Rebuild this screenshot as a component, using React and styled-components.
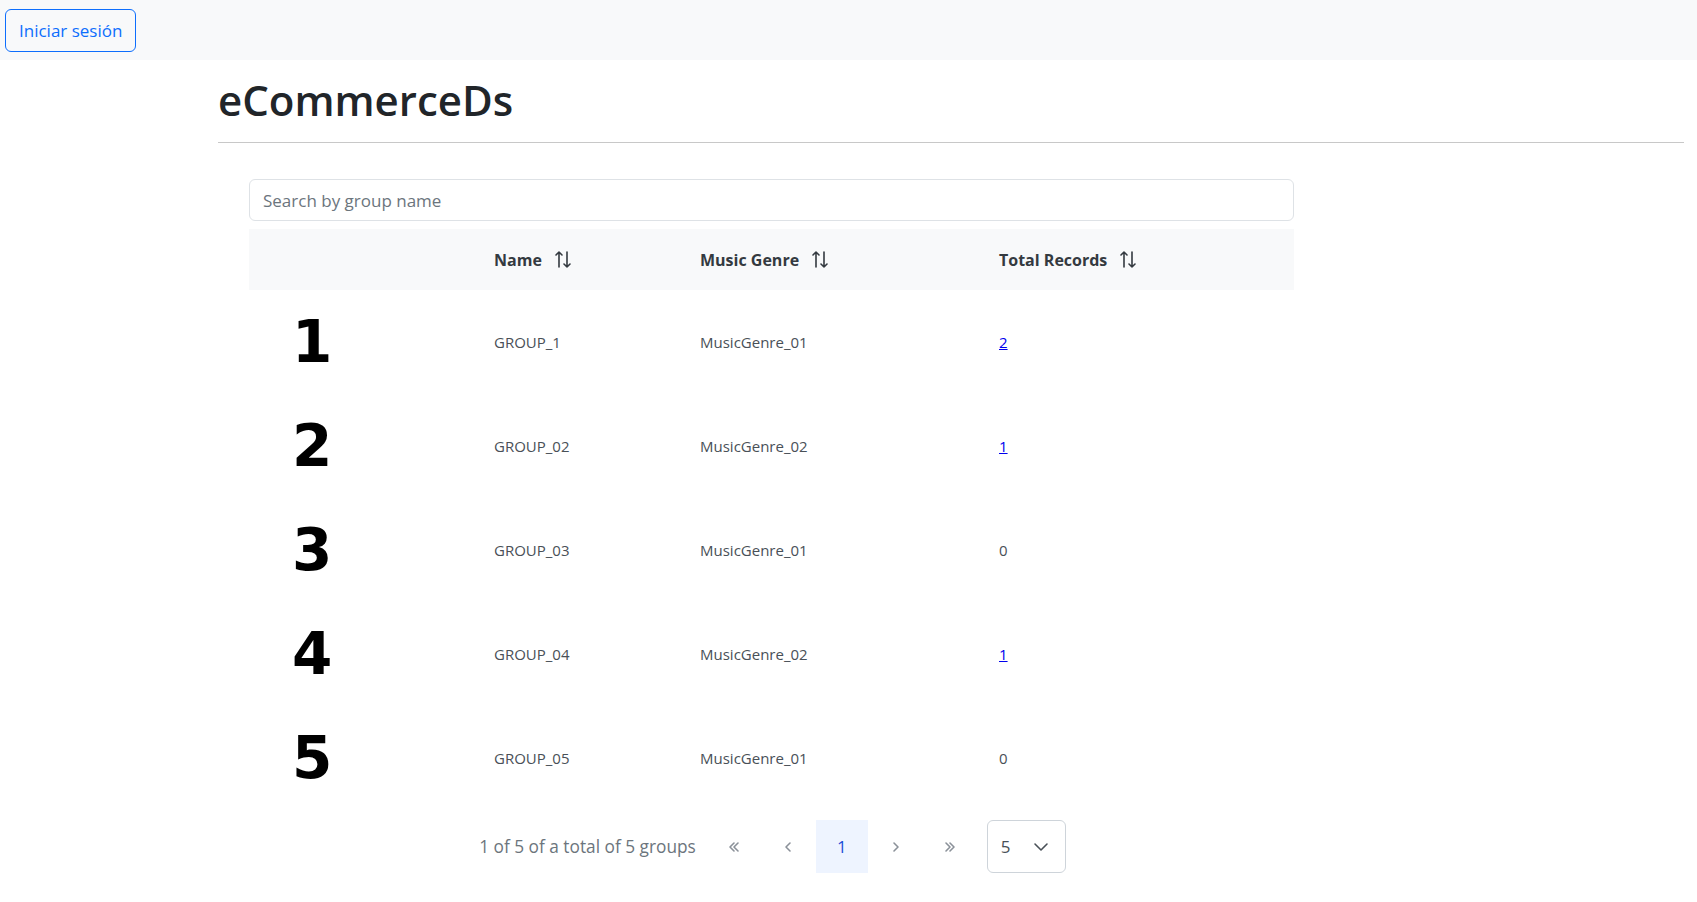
import React from "react";
import styled, { createGlobalStyle } from "styled-components";

const GlobalStyle = createGlobalStyle`
  body {
    margin: 0;
    background: #fff;
    font-family: "Open Sans", "Noto Sans", sans-serif;
    color: #212529;
  }
`;

const groups = [
  { id: 1, name: "GROUP_1", genre: "MusicGenre_01", total: 2 },
  { id: 2, name: "GROUP_02", genre: "MusicGenre_02", total: 1 },
  { id: 3, name: "GROUP_03", genre: "MusicGenre_01", total: 0 },
  { id: 4, name: "GROUP_04", genre: "MusicGenre_02", total: 1 },
  { id: 5, name: "GROUP_05", genre: "MusicGenre_01", total: 0 },
];

const Navbar = styled.nav`
  height: 60px;
  background: #f8f9fa;
  display: flex;
  align-items: center;
  padding: 0 5px;
  box-sizing: border-box;
`;

const LoginButton = styled.button`
  height: 43px;
  padding: 0 13px;
  border: 1px solid #0d6efd;
  border-radius: 6px;
  background: transparent;
  color: #0d6efd;
  font-family: inherit;
  font-size: 17px;
  cursor: pointer;
`;

const Main = styled.main`
  margin: 0 13px 0 218px;
`;

const Title = styled.h1`
  margin: 14px 0 0;
  font-size: 42px;
  font-weight: 600;
  line-height: 52px;
  color: #212529;
`;

const Rule = styled.hr`
  margin: 16px 0 0;
  border: 0;
  border-top: 1px solid #c8c8c8;
`;

const TableWrap = styled.section`
  width: 1045px;
  margin: 36px 0 0 31px;
`;

const Search = styled.input`
  width: 100%;
  height: 42px;
  box-sizing: border-box;
  padding: 0 13px;
  border: 1px solid #dee2e6;
  border-radius: 6px;
  font-family: inherit;
  font-size: 17px;
  color: #495057;
  &::placeholder {
    color: #6c757d;
  }
`;

const Row = styled.div`
  display: grid;
  grid-template-columns: 229px 206px 299px 1fr;
  align-items: center;
  height: ${(p) => (p.head ? "61px" : "104px")};
  background: ${(p) => (p.head ? "#f8f9fa" : "#fff")};
  margin-top: ${(p) => (p.head ? "8px" : "0")};
`;

const HeadCell = styled.div`
  display: flex;
  align-items: center;
  gap: 12px;
  padding: 0 16px;
  font-size: 16px;
  font-weight: 700;
  color: #343a40;
`;

const Cell = styled.div`
  padding: 0 16px;
  font-size: 15px;
  color: #495057;
`;

const Rank = styled.div`
  padding-left: 43px;
  font-family: "DejaVu Sans", sans-serif;
  font-weight: 700;
  font-size: 58px;
  line-height: 1;
  color: #000;
`;

const Count = styled.a`
  color: #0000ee;
  text-decoration: underline;
`;

const Paginator = styled.div`
  display: flex;
  justify-content: center;
  align-items: center;
  padding: 10px 22px 8px 16px;
`;

const Report = styled.span`
  color: #6c757d;
  font-size: 17.3px;
  padding: 0 8px;
  margin-right: 3px;
`;

const PageButton = styled.button`
  width: 52px;
  height: 53px;
  margin: 0 1px;
  border: 0;
  background: ${(p) => (p.active ? "#eef4ff" : "transparent")};
  color: ${(p) => (p.active ? "#1d4ed8" : "#8b9199")};
  font-family: inherit;
  font-size: 17px;
  display: flex;
  align-items: center;
  justify-content: center;
  padding: 0;
`;

const RowsSelect = styled.div`
  width: 79px;
  height: 53px;
  box-sizing: border-box;
  margin-left: 10px;
  border: 1px solid #ced4da;
  border-radius: 6px;
  display: flex;
  align-items: center;
  justify-content: space-between;
  padding: 0 16px 0 13px;
  font-size: 17px;
  color: #495057;
`;

const SortIcon = () => (
  <svg width="18" height="19" viewBox="0 0 18 19" fill="none" stroke="#343a40" strokeWidth="1.6" strokeLinecap="round" strokeLinejoin="round">
    <path d="M5 2v15M2 5l3-3 3 3" />
    <path d="M13 2v15M10 14l3 3 3-3" />
  </svg>
);

const Chevron = ({ dir = "left", double }) => {
  const flip = dir === "right" ? "scale(-1,1) translate(-16,0)" : undefined;
  return (
    <svg width="16" height="16" viewBox="0 0 16 16" fill="none" stroke="currentColor" strokeWidth="1.6" strokeLinecap="round" strokeLinejoin="round">
      <g transform={flip}>
        {double ? (
          <>
            <path d="M8 4L4 8l4 4" />
            <path d="M12 4L8 8l4 4" />
          </>
        ) : (
          <path d="M10 4L6 8l4 4" />
        )}
      </g>
    </svg>
  );
};

const Caret = () => (
  <svg width="16" height="16" viewBox="0 0 16 16" fill="none" stroke="#495057" strokeWidth="1.6" strokeLinecap="round" strokeLinejoin="round">
    <path d="M2 5l6 6 6-6" />
  </svg>
);

function App() {
  return (
    <>
      <GlobalStyle />
      <Navbar>
        <LoginButton>Iniciar sesión</LoginButton>
      </Navbar>
      <Main>
        <Title>eCommerceDs</Title>
        <Rule />
        <TableWrap>
          <Search placeholder="Search by group name" />
          <Row head>
            <HeadCell />
            <HeadCell>
              Name <SortIcon />
            </HeadCell>
            <HeadCell>
              Music Genre <SortIcon />
            </HeadCell>
            <HeadCell>
              Total Records <SortIcon />
            </HeadCell>
          </Row>
          {groups.map((g) => (
            <Row key={g.id}>
              <Rank>{g.id}</Rank>
              <Cell>{g.name}</Cell>
              <Cell>{g.genre}</Cell>
              <Cell>{g.total > 0 ? <Count href="#">{g.total}</Count> : g.total}</Cell>
            </Row>
          ))}
          <Paginator>
            <Report>1 of 5 of a total of 5 groups</Report>
            <PageButton>
              <Chevron double />
            </PageButton>
            <PageButton>
              <Chevron />
            </PageButton>
            <PageButton active>1</PageButton>
            <PageButton>
              <Chevron dir="right" />
            </PageButton>
            <PageButton>
              <Chevron dir="right" double />
            </PageButton>
            <RowsSelect>
              5 <Caret />
            </RowsSelect>
          </Paginator>
        </TableWrap>
      </Main>
    </>
  );
}

export default App;
